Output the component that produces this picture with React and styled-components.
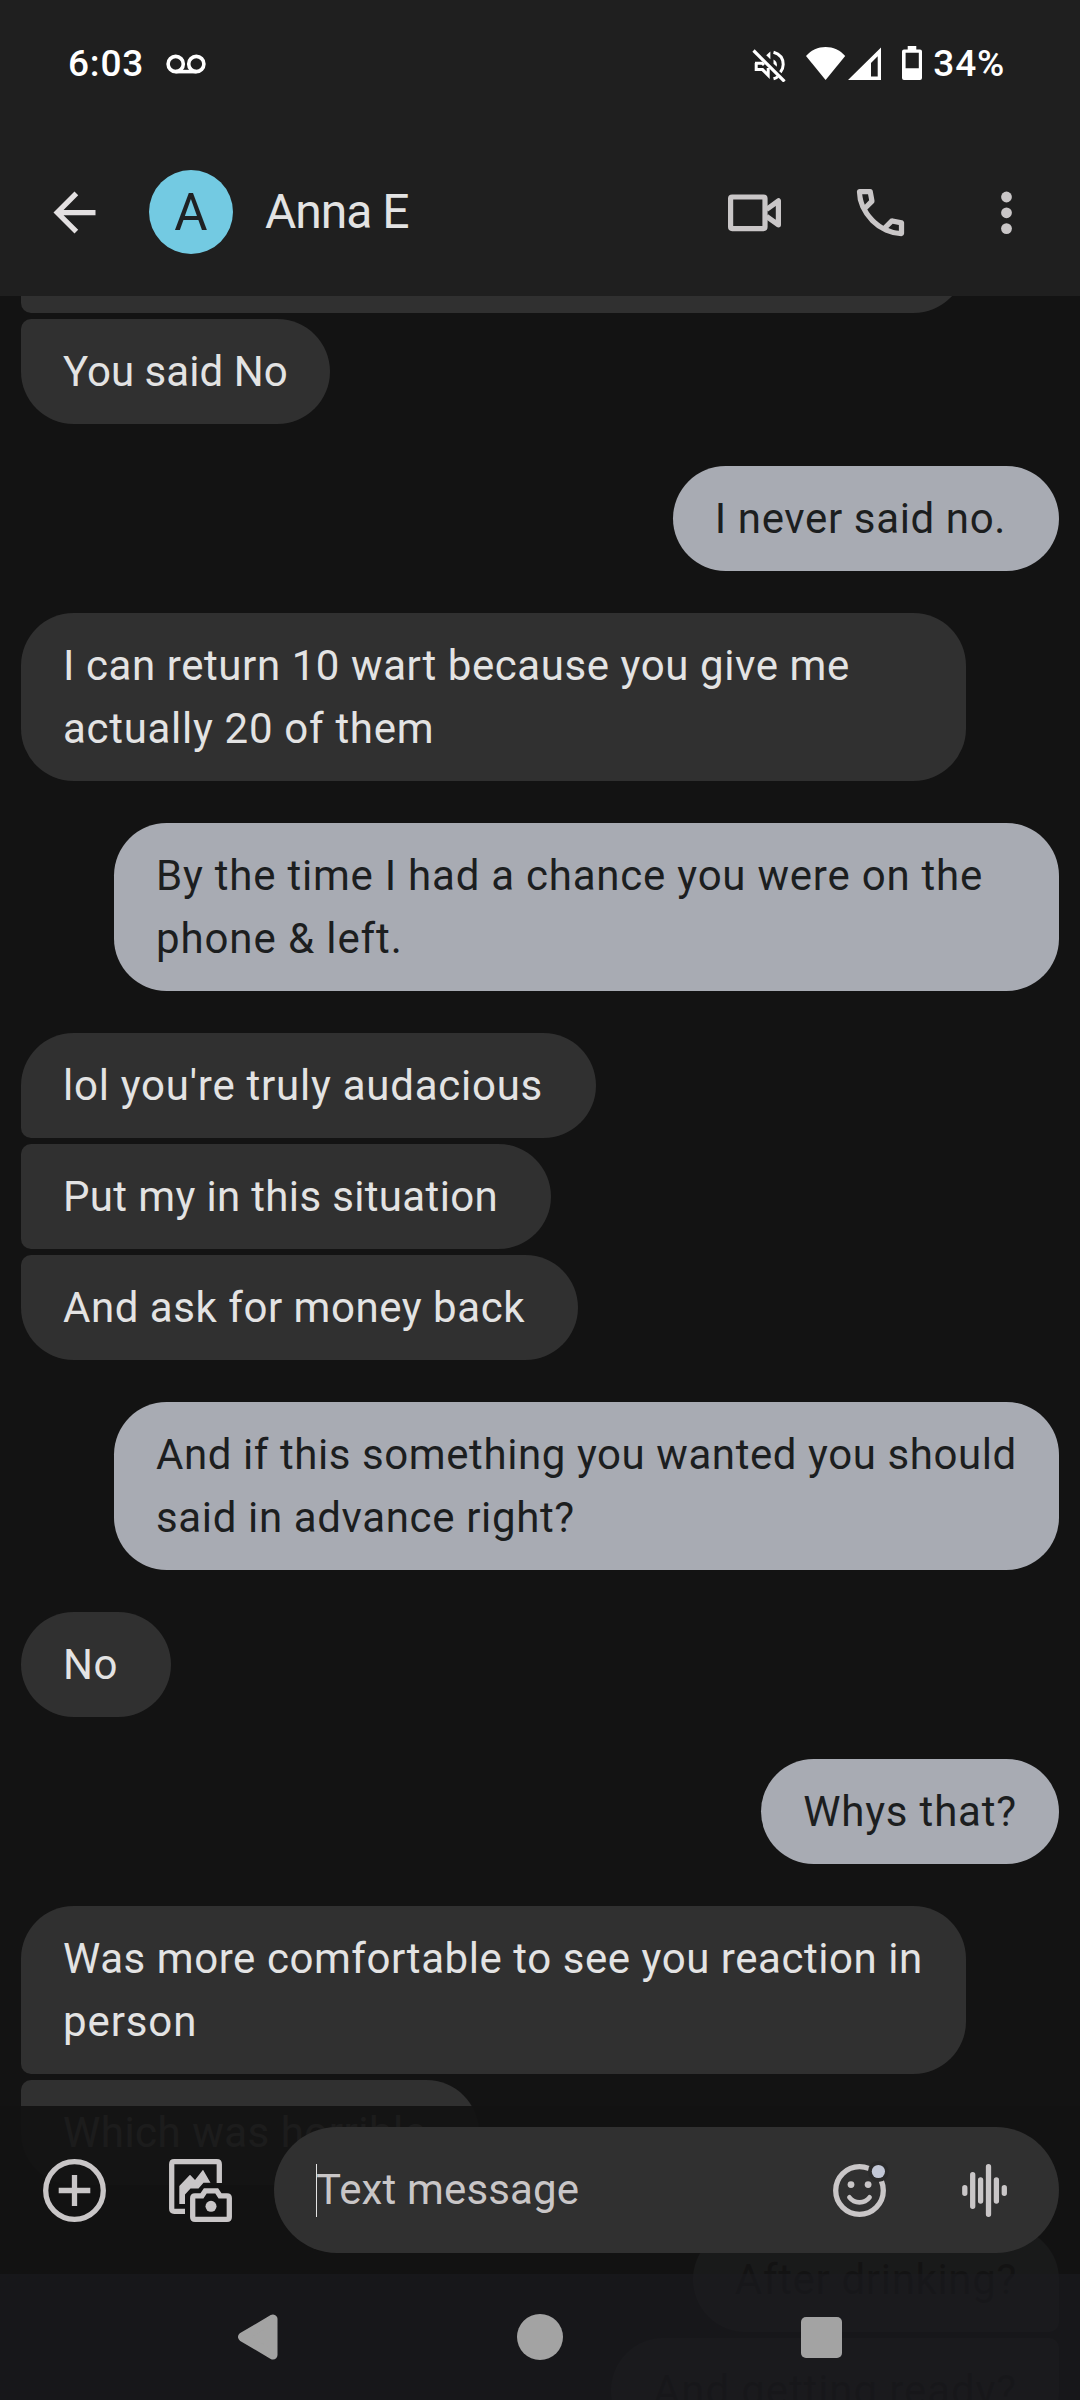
import React from 'react'
import styled, { createGlobalStyle, css } from 'styled-components'

const GlobalStyle = createGlobalStyle`
  * {
    box-sizing: border-box;
  }
  body {
    margin: 0;
    background: #131313;
    font-family: Roboto, 'Liberation Sans', sans-serif;
  }
`

// each line is [text, letter spacing]
const groups = [
  {
    own: false,
    messages: [
      { wide: true, lines: [['\u00a0', 0], ['\u00a0', 0]] },
      { lines: [['You said No', 0.05]] },
    ],
  },
  { own: true, messages: [{ lines: [['I never said no.\u00a0', 0.63]] }] },
  {
    own: false,
    messages: [
      {
        wide: true,
        lines: [
          ['I can return 10 wart because you give me', 0.58],
          ['actually 20 of them', 0.7],
        ],
      },
    ],
  },
  {
    own: true,
    messages: [
      {
        wide: true,
        lines: [
          ['By the time I had a chance you were on the', 0.77],
          ['phone & left.', 0.9],
        ],
      },
    ],
  },
  {
    own: false,
    messages: [
      { lines: [["lol you're truly audacious\u00a0", 0.75]] },
      { lines: [['Put my in this situation\u00a0', 0.35]] },
      { lines: [['And ask for money back\u00a0', 0.54]] },
    ],
  },
  {
    own: true,
    messages: [
      {
        wide: true,
        lines: [
          ['And if this something you wanted you should', 0.58],
          ['said in advance right?', 0.64],
        ],
      },
    ],
  },
  { own: false, messages: [{ lines: [['No\u00a0', 0.5]] }] },
  { own: true, messages: [{ lines: [['Whys that?', 0.82]] }] },
  {
    own: false,
    messages: [
      {
        wide: true,
        lines: [
          ['Was more comfortable to see you reaction in', 0.56],
          ['person', 0.9],
        ],
      },
      { lines: [['Which was horrible\u00a0', 0.5]] },
    ],
  },
  {
    own: true,
    messages: [
      { lines: [['After drinking?', 0.67]] },
      { lines: [['And getting ready?', 0.9]] },
    ],
  },
]

const VoicemailIcon = () => (
  <svg width="40" height="36" viewBox="0 0 40 36" fill="none" stroke="#fff" strokeWidth="3.6">
    <circle cx="9.7" cy="18" r="7.6" />
    <circle cx="30.3" cy="18" r="7.6" />
    <path d="M9.7 25.6H30.3" />
  </svg>
)

const MuteIcon = () => (
  <svg width="34" height="36" viewBox="0 0 34 36" fill="none" stroke="#fff" strokeWidth="3">
    <path d="M1.5 4.5L32.5 35.5" strokeWidth="3.2" />
    <path d="M4.2 17V23.6H10.5L16.2 29.4V22" />
    <path d="M3 17.2H10L12 19" />
    <path d="M18.4 5.5V13.2L14.2 9.2Z" fill="#fff" stroke="none" />
    <path d="M21.5 6.2C28 8 31.2 13 31.2 18.5C31.2 21.3 30.2 24 28.4 26.2" />
    <path d="M21.5 13.4C24.2 14.6 25.4 17 24.8 20.8L21.5 17.8Z" fill="#fff" stroke="none" />
    <path d="M21.5 32.8C23 32.4 24.6 31.6 25.8 30.6" />
  </svg>
)

const WifiIcon = () => (
  <svg width="40" height="36" viewBox="0 0 40 36" fill="#fff">
    <path d="M0 10C5.2 4 12 1 19.6 1S34 4 39.2 10L19.6 34Z" />
  </svg>
)

const SignalIcon = () => (
  <svg width="34" height="36" viewBox="0 0 34 36" fill="#fff">
    <path fillRule="evenodd" d="M0 34L33 1.5V34ZM23 17V30.6H29.7V10.2Z" />
  </svg>
)

const BatteryIcon = () => (
  <svg width="20" height="36" viewBox="0 0 20 36" fill="#fff">
    <path
      fillRule="evenodd"
      d="M5.7 0H14.3V3.6H18A2 2 0 0 1 20 5.6V32A2 2 0 0 1 18 34H2A2 2 0 0 1 0 32V5.6A2 2 0 0 1 2 3.6H5.7ZM3.6 6.8V22.3H16.8V6.8Z"
    />
  </svg>
)

const BackIcon = () => (
  <svg width="63" height="63" viewBox="0 0 24 24" fill="#e3e0e1">
    <path d="M20 11H7.83l5.59-5.59L12 4l-8 8 8 8 1.41-1.41L7.83 13H20v-2z" />
  </svg>
)

const VideoIcon = () => (
  <svg width="63" height="63" viewBox="0 0 63 63" fill="none" stroke="#c9c6c7" strokeWidth="5.2" strokeLinejoin="round">
    <rect x="7.6" y="16" width="34.4" height="31.6" rx="1.5" />
    <path d="M43.5 28.5L55.4 19.8V43.8L43.5 35.3" />
  </svg>
)

const PhoneIcon = () => (
  <svg width="63" height="63" viewBox="0 0 24 24" fill="#c9c6c7">
    <path d="M19.95 21q-3.125 0-6.175-1.363T8.225 15.775 4.363 10.225 3 4.05q0-.45.3-.75T4.05 3H8.1q.35 0 .625.238T9.05 3.8l.65 3.5q.05.4-.025.675T9.4 8.45L6.975 10.9q.5.925 1.188 1.788T9.675 14.35q.775.775 1.625 1.438T13.1 17l2.35-2.35q.225-.225.588-.338T16.75 14.25l3.45.7q.35.1.575.363T21 15.9v4.05q0 .45-.3.75t-.75.3M6.025 9l1.65-1.65L7.25 5H5.025q.125 1.025.35 2.025T6.025 9m8.95 8.95q.975.425 1.988.675T19 18.95v-2.2l-2.35-.475-1.675 1.675" />
  </svg>
)

const MoreIcon = () => (
  <svg width="63" height="63" viewBox="0 0 63 63" fill="#c9c6c7">
    <circle cx="31.5" cy="16" r="5.4" />
    <circle cx="31.5" cy="31.8" r="5.4" />
    <circle cx="31.5" cy="47.6" r="5.4" />
  </svg>
)

const AddIcon = () => (
  <svg width="63" height="63" viewBox="0 0 63 63" fill="none" stroke="#c9c6c7" strokeWidth="5.3">
    <circle cx="31.5" cy="31.5" r="28.8" />
    <path d="M31.5 16V47M15.7 31.5H47.3" />
  </svg>
)

const GalleryIcon = () => (
  <svg width="63" height="63" viewBox="0 0 63 63" fill="none" stroke="#c9c6c7" strokeWidth="5.3">
    <path d="M50.3 24V5.2Q50.3 2.7 47.8 2.7H5.2Q2.7 2.7 2.7 5.2V49.8Q2.7 52.3 5.2 52.3H16" />
    <path
      d="M10.3 45V27L21 15.7L26 21L34 10.7L41.5 23.7H34.5L29.5 29.5H21.5L16 35.5V45Z"
      fill="#c9c6c7"
      stroke="none"
    />
    <path d="M26 36.8H33L36.3 31.8H47.7L51 36.8H58Q60.3 36.8 60.3 39V58Q60.3 60.3 58 60.3H26Q23.7 60.3 23.7 58V39Q23.7 36.8 26 36.8Z" />
    <circle cx="42" cy="47.3" r="5.5" fill="#c9c6c7" stroke="none" />
  </svg>
)

const EmojiIcon = () => (
  <svg width="63" height="63" viewBox="0 0 63 63" fill="none" stroke="#c9c6c7" strokeWidth="5.3">
    <circle cx="31.5" cy="31.5" r="23.8" />
    <circle cx="23" cy="25.6" r="3.4" fill="#c9c6c7" stroke="none" />
    <circle cx="40.1" cy="25.6" r="3.4" fill="#c9c6c7" stroke="none" />
    <path d="M21.4 38.3C26.5 45 36.5 45 41.6 38.3" strokeWidth="4.6" strokeLinecap="round" />
    <circle cx="50.4" cy="12.5" r="10.5" fill="#2b2b2b" stroke="none" />
    <circle cx="50.4" cy="12.5" r="6.6" fill="#c2c7d6" stroke="none" />
  </svg>
)

const VoiceIcon = () => (
  <svg width="63" height="63" viewBox="0 0 63 63" stroke="#c9c6c7" strokeWidth="5.3" strokeLinecap="round">
    <path d="M11.8 28.7V34.3M19.7 15.7V47.3M27.6 20.9V42.1M35.5 7.7V55.3M43.4 20.9V42.1M51.3 28.7V34.3" />
  </svg>
)

const NavBackIcon = () => (
  <svg width="46" height="46" viewBox="0 0 46 46" fill="#a3a3a3" stroke="#a3a3a3" strokeWidth="9" strokeLinejoin="round">
    <path d="M7.5 23L38 5V41Z" />
  </svg>
)

const App = () => {
  return (
    <Screen>
      <GlobalStyle />
      <Header>
        <StatusBar>
          <StatusText>6:03</StatusText>
          <VoicemailIcon />
          <StatusRight>
            <MuteIcon />
            <Network>
              <WifiIcon />
              <SignalIcon />
            </Network>
            <BatteryIcon />
            <StatusText>34%</StatusText>
          </StatusRight>
        </StatusBar>
        <TopBar>
          <BackIcon />
          <Avatar>A</Avatar>
          <Name>Anna E</Name>
          <Actions>
            <VideoIcon />
            <PhoneIcon />
            <MoreIcon />
          </Actions>
        </TopBar>
      </Header>

      <Chat>
        <Thread>
          {groups.map((group, i) => (
            <Group key={i} $own={group.own}>
              {group.messages.map((message, j) => (
                <Bubble key={j} $own={group.own} $wide={message.wide}>
                  {message.lines.map(([text, spacing], k) => (
                    <Line key={k} $spacing={spacing}>{text}</Line>
                  ))}
                </Bubble>
              ))}
            </Group>
          ))}
        </Thread>
      </Chat>

      <Bottom>
        <Compose>
          <AddIcon />
          <GalleryIcon />
          <Field>
            <Caret />
            <Placeholder>Text message</Placeholder>
            <EmojiIcon />
            <VoiceIcon />
          </Field>
        </Compose>
        <NavBar>
          <NavBackIcon />
          <HomeButton />
          <RecentsButton />
        </NavBar>
      </Bottom>
    </Screen>
  )
}

export default App

const Screen = styled.div`
  position: relative;
  display: flex;
  flex-direction: column;
  width: 1080px;
  height: 2400px;
  overflow: hidden;
  background: #131313;
  color: #e3e3e3;

  svg {
    display: block;
    flex-shrink: 0;
  }
`

const Header = styled.header`
  flex-shrink: 0;
  background: #1f1f1f;
`

const StatusBar = styled.div`
  display: flex;
  align-items: center;
  height: 128px;
  padding: 0 75px 0 68px;
  gap: 22px;
`

const StatusText = styled.span`
  color: #fff;
  font-size: 37px;
  font-weight: 500;
  line-height: 40px;
  letter-spacing: 0.8px;
`

const StatusRight = styled.div`
  display: flex;
  align-items: center;
  gap: 20px;
  margin-left: auto;

  ${StatusText} {
    margin-left: -9px;
  }
`

const Network = styled.div`
  display: flex;
  gap: 2px;
`

const TopBar = styled.div`
  display: flex;
  align-items: center;
  height: 168px;
  padding: 0 42px 0 43px;
`

const Avatar = styled.div`
  width: 84px;
  height: 84px;
  margin-left: 43px;
  border-radius: 50%;
  background: #73cae2;
  color: #1f2123;
  font-size: 51px;
  line-height: 86px;
  text-align: center;
`

const Name = styled.h1`
  margin: 0 0 0 32px;
  font-size: 48px;
  font-weight: 400;
  line-height: 64px;
  letter-spacing: -1px;
`

const Actions = styled.div`
  display: flex;
  gap: 63px;
  margin-left: auto;
`

const Chat = styled.main`
  flex: 1;
  min-height: 0;
  overflow: hidden;
`

/* scrolled so that the first bubble is mostly behind the header */
const Thread = styled.div`
  display: flex;
  flex-direction: column;
  gap: 42px;
  margin-top: -151px;
  padding: 0 21px;
`

const Bubble = styled.div`
  width: ${({ $wide }) => ($wide ? '945px' : 'auto')};
  padding: 21px 42px;
  border-radius: 52.5px;
  background: ${({ $own }) => ($own ? '#a8abb3' : '#303030')};
  color: ${({ $own }) => ($own ? '#1c1e1f' : '#e3e3e3')};
`

const Group = styled.section`
  display: flex;
  flex-direction: column;
  align-items: ${({ $own }) => ($own ? 'flex-end' : 'flex-start')};
  gap: 6px;

  ${({ $own }) =>
    $own
      ? css`
          ${Bubble}:not(:last-child) {
            border-bottom-right-radius: 10px;
          }
          ${Bubble}:not(:first-child) {
            border-top-right-radius: 10px;
          }
        `
      : css`
          ${Bubble}:not(:last-child) {
            border-bottom-left-radius: 10px;
          }
          ${Bubble}:not(:first-child) {
            border-top-left-radius: 10px;
          }
        `}
`

const Line = styled.div`
  font-size: 42px;
  line-height: 63px;
  letter-spacing: ${({ $spacing }) => $spacing}px;
  white-space: nowrap;
`

/* translucent, the thread shows faintly through it */
const Bottom = styled.footer`
  position: absolute;
  left: 0;
  right: 0;
  bottom: 0;
  background: rgba(19, 19, 19, 0.955);
`

const Compose = styled.div`
  display: flex;
  align-items: center;
  height: 168px;
  padding: 0 21px 0 43px;

  > svg + svg {
    margin-left: 63px;
  }
`

const Field = styled.div`
  display: flex;
  flex: 1;
  align-items: center;
  height: 126px;
  margin-left: 42px;
  padding: 0 43px 0 42px;
  border-radius: 63px;
  background: #303030;

  svg + svg {
    margin-left: 62px;
  }
`

const Caret = styled.span`
  width: 1px;
  height: 53px;
  margin-right: -1px;
  background: #e3e3e3;
`

const Placeholder = styled.span`
  margin-right: auto;
  color: #c9c6c7;
  font-size: 42px;
  line-height: 62px;
  letter-spacing: 0.15px;
`

const NavBar = styled.nav`
  display: flex;
  align-items: center;
  justify-content: space-between;
  height: 126px;
  padding: 0 238px 0 235px;
  background: rgba(27, 27, 31, 0.6);
`

const HomeButton = styled.div`
  width: 46px;
  height: 46px;
  margin: 0 3px 0 0;
  border-radius: 50%;
  background: #a3a3a3;
`

const RecentsButton = styled.div`
  width: 41px;
  height: 41px;
  border-radius: 5px;
  background: #a3a3a3;
`
